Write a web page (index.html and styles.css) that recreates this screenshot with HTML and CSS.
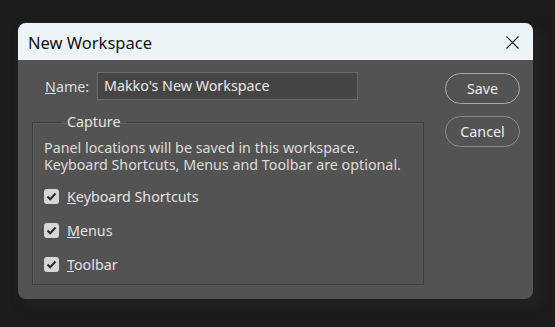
FILE: index.html
```html
<!DOCTYPE html>
<html>
<head>
<meta charset="utf-8">
<link rel="stylesheet" href="styles.css">
</head>
<body>
<div class="dialog">
  <div class="titlebar">
    <span class="title">New Workspace</span>
    <svg class="close" width="13" height="13" viewBox="0 0 13 13"><path d="M0.5 0.5L12.5 12.5M12.5 0.5L0.5 12.5" stroke="#111" stroke-width="1.2" fill="none"/></svg>
  </div>
  <div class="body">
    <div class="main">
      <div class="name-row">
        <span class="label"><u>N</u>ame:</span>
        <div class="input">Makko's New Workspace</div>
      </div>
      <fieldset class="group">
        <legend>Capture</legend>
        <div class="desc">
          <div class="line">Panel locations will be saved in this workspace.</div>
          <div class="line">Keyboard Shortcuts, Menus and Toolbar are optional.</div>
        </div>
        <div class="checks">
          <div class="check"><span class="box"><svg width="11" height="9" viewBox="0 0 11 9"><path d="M1.5 4.5L4.2 7.2L9.5 1.5" stroke="#2a2a2a" stroke-width="2" fill="none"/></svg></span><span><u>K</u>eyboard Shortcuts</span></div>
          <div class="check"><span class="box"><svg width="11" height="9" viewBox="0 0 11 9"><path d="M1.5 4.5L4.2 7.2L9.5 1.5" stroke="#2a2a2a" stroke-width="2" fill="none"/></svg></span><span><u>M</u>enus</span></div>
          <div class="check"><span class="box"><svg width="11" height="9" viewBox="0 0 11 9"><path d="M1.5 4.5L4.2 7.2L9.5 1.5" stroke="#2a2a2a" stroke-width="2" fill="none"/></svg></span><span><u>T</u>oolbar</span></div>
        </div>
      </fieldset>
    </div>
    <div class="buttons">
      <div class="btn">Save</div>
      <div class="btn">Cancel</div>
    </div>
  </div>
</div>
</body>
</html>
```
FILE: styles.css
```css
html, body { margin: 0; padding: 0; }
body {
  background: #1c1c1c;
  width: 555px;
  height: 327px;
  font-family: "Noto Sans", "Open Sans", sans-serif;
  padding: 23px 0 0 18px;
  box-sizing: border-box;
  overflow: hidden;
}
.dialog {
  width: 515px;
  height: 276px;
  border-radius: 8px;
  overflow: hidden;
  background: #535353;
  display: flex;
  flex-direction: column;
  box-shadow: 0 0 0 1px #202020, 6px 6px 12px rgba(40,40,40,0.6);
}
.titlebar {
  height: 37px;
  background: #edf4f8;
  display: flex;
  align-items: center;
  justify-content: space-between;
  padding: 0 14px 0 10px;
  flex: none;
}
.title {
  font-size: 16.5px;
  color: #111;
  position: relative;
  top: 1px;
}
.close { display: block; position: relative; top: 1px; }
.body {
  display: flex;
  flex: 1;
  padding: 12px 0 0 14px;
  color: #e2e2e2;
  font-size: 14.3px;
}
.main { width: 392px; }
.name-row {
  display: flex;
  align-items: center;
  padding-left: 13px;
  gap: 8px;
}
.label { color: #dedede; width: 44px; }
.input {
  width: 253px;
  height: 26px;
  background: #454545;
  border: 1px solid #6b6b6b;
  box-sizing: content-box;
  padding-left: 6px;
  line-height: 26px;
  color: #eaeaea;
}
.group {
  margin: 14px 0 0 0;
  padding: 0 0 3px 11px;
  border: 1px solid #3d3d3d;
  box-shadow: inset 1px 1px 0 #5e5e5e;
}
.group legend {
  padding: 0 5px;
  margin-left: 18px;
  color: #e2e2e2;
  line-height: 16px;
}
.desc {
  padding-top: 9px;
  color: #dcdcdc;
}
.line {
  height: 17px;
  line-height: 17px;
}
.checks {
  margin-top: 6px;
  display: flex;
  flex-direction: column;
}
.check {
  display: flex;
  align-items: center;
  gap: 8px;
  height: 34px;
}
.box {
  width: 15px;
  height: 15px;
  border-radius: 3px;
  background: #d6d6d6;
  display: flex;
  align-items: center;
  justify-content: center;
}
.box svg { display: block; }
.buttons {
  margin-left: 21px;
  display: flex;
  flex-direction: column;
  gap: 12px;
  padding-top: 1px;
}
.btn {
  width: 73px;
  height: 29px;
  border: 1px solid #a8a8a8;
  border-radius: 16px;
  display: flex;
  align-items: center;
  justify-content: center;
  color: #ececec;
  font-size: 14.3px;
}
.btn + .btn { border-color: #8a8a8a; }
```
